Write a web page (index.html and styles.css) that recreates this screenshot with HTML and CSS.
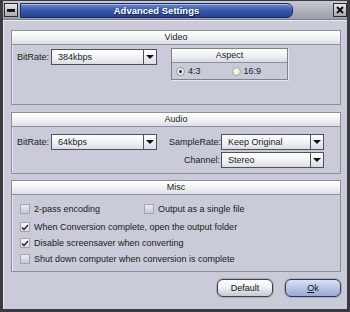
FILE: index.html
```html
<!DOCTYPE html>
<html lang="en">
<head>
  <meta charset="UTF-8" />
  <title>Advanced Settings</title>
  <link rel="stylesheet" href="styles.css">
</head>
<body>
  <div class="window">
    <div class="titlebar">
      <span class="tb-btn"><span class="tb-min"></span></span>
      <div class="title-pill">Advanced Settings</div>
      <span class="tb-btn tb-close">
        <svg width="8" height="8" viewBox="0 0 8 8"><path d="M1 1L7 7M7 1L1 7" stroke="#111" stroke-width="2"/></svg>
      </span>
    </div>

    <div class="content">
      <section class="panel video">
        <div class="panel-head">Video</div>
        <div class="panel-body video-body">
          <div class="field">
            <label class="lbl">BitRate:</label>
            <div class="select sel-short"><span>384kbps</span><i class="arrow"></i></div>
          </div>
          <div class="aspect">
            <div class="aspect-head">Aspect</div>
            <div class="aspect-body">
              <span class="opt"><span class="radio on"></span>4:3</span>
              <span class="opt"><span class="radio hover"></span>16:9</span>
            </div>
          </div>
        </div>
      </section>

      <section class="panel audio">
        <div class="panel-head">Audio</div>
        <div class="panel-body audio-body">
          <div class="field">
            <label class="lbl">BitRate:</label>
            <div class="select sel-short"><span>64kbps</span><i class="arrow"></i></div>
          </div>
          <div class="audio-right">
            <div class="field">
              <label class="lbl-right">SampleRate:</label>
              <div class="select sel-wide"><span>Keep Original</span><i class="arrow"></i></div>
            </div>
            <div class="field">
              <label class="lbl-right">Channel:</label>
              <div class="select sel-wide"><span>Stereo</span><i class="arrow"></i></div>
            </div>
          </div>
        </div>
      </section>

      <section class="panel misc">
        <div class="panel-head">Misc</div>
        <div class="panel-body misc-body">
          <div class="row first">
            <span class="check-item col1"><span class="check"></span>2-pass encoding</span>
            <span class="check-item"><span class="check"></span>Output as a single file</span>
          </div>
          <div class="row">
            <span class="check-item"><span class="check on"><svg width="8" height="7" viewBox="0 0 8 7"><path d="M1 3.5L3 5.5L7 1" stroke="#222" stroke-width="1.3" fill="none"/></svg></span>When Conversion complete, open the output folder</span>
          </div>
          <div class="row">
            <span class="check-item"><span class="check on"><svg width="8" height="7" viewBox="0 0 8 7"><path d="M1 3.5L3 5.5L7 1" stroke="#222" stroke-width="1.3" fill="none"/></svg></span>Disable screensaver when converting</span>
          </div>
          <div class="row">
            <span class="check-item"><span class="check"></span>Shut down computer when conversion is complete</span>
          </div>
        </div>
      </section>

      <div class="buttons">
        <button class="btn">Default</button>
        <button class="btn btn-ok"><u>O</u>k</button>
      </div>
    </div>
  </div>
</body>
</html>
```

FILE: styles.css
```css
* {
  box-sizing: border-box;
}
body {
  margin: 0;
  font-family: "Liberation Sans", Arial, sans-serif;
  font-size: 9px;
  color: #1a1a1a;
  background: #c9ccd8;
}
.window {
  width: 350px;
  height: 312px;
  background: #c9ccd8;
  border: 3px solid #3a3b3f;
  border-top-width: 1px;
  display: flex;
  flex-direction: column;
}
.titlebar {
  height: 19px;
  display: flex;
  align-items: center;
  padding: 0 0 0 1px;
  background: linear-gradient(#c6c9d2, #9a9ea8);
  border-bottom: 1px solid #7c808a;
}
.tb-btn {
  width: 14px;
  height: 14px;
  border: 1px solid #2c2d31;
  background: linear-gradient(#e6e7ec, #a7aab3);
  display: flex;
  align-items: center;
  justify-content: center;
  flex: none;
}
.tb-min {
  width: 8px;
  height: 3px;
  background: #1d1e22;
  border-top: 1px solid #000;
}
.title-pill {
  width: 273px;
  height: 15px;
  margin-left: 2px;
  background: linear-gradient(#6d8ad0, #3a5cb0 45%, #23438f);
  border: 1px solid #1a2c62;
  border-radius: 0 6px 6px 0;
  box-shadow: inset 0 1px 0 #a9bce8;
  color: #fff;
  font-weight: bold;
  font-size: 9.5px;
  text-align: center;
  line-height: 13px;
  text-shadow: 1px 1px 0 #1a2750;
}
.tb-close {
  margin-left: auto;
  margin-right: 0;
}
.content {
  flex: 1;
  padding: 9px 6px 0 7px;
  border-left: 1px solid #e9eaef;
  border-top: 1px solid #e9eaef;
  display: flex;
  flex-direction: column;
}
.panel {
  border: 1px solid #8c909c;
  box-shadow: inset 1px 1px 0 #e6e8ee;
}
.panel-head {
  height: 14px;
  line-height: 13px;
  text-align: center;
  background: linear-gradient(#ffffff, #f2f3f6 50%, #dcdee6);
  border-bottom: 1px solid #8c909c;
}
.video {
  height: 75px;
}
.audio {
  height: 62px;
  margin-top: 7px;
}
.misc {
  height: 92px;
  margin-top: 6px;
}
.panel-body {
  display: flex;
  padding-left: 5px;
}
.video-body {
  padding-top: 4px;
}
.audio-body {
  padding-top: 7px;
}
.field {
  display: flex;
  align-items: center;
  height: 16px;
}
.lbl {
  width: 34px;
}
.lbl-right {
  width: 52px;
  text-align: right;
  padding-right: 1px;
  white-space: nowrap;
}
.select {
  height: 16px;
  display: flex;
  align-items: center;
  border: 1px solid #4e515b;
  background: linear-gradient(#ffffff, #eef0f4 60%, #dadde5);
}
.select span {
  flex: 1;
  padding-left: 6px;
}
.sel-short {
  width: 106px;
}
.sel-wide {
  width: 103px;
}
.arrow {
  width: 13px;
  height: 14px;
  border-left: 1px solid #4e515b;
  background: linear-gradient(#ffffff, #dadde5);
  display: flex;
  align-items: center;
  justify-content: center;
}
.arrow::after {
  content: "";
  border-left: 4px solid transparent;
  border-right: 4px solid transparent;
  border-top: 4px solid #111;
}
.aspect {
  width: 117px;
  height: 32px;
  margin-left: 14px;
  margin-top: -1px;
  border: 1px solid #7e828e;
  box-shadow: 1px 1px 0 #e9eaef;
}
.aspect-head {
  height: 14px;
  line-height: 13px;
  text-align: center;
  background: linear-gradient(#ffffff, #eceef2 60%, #d6d9e1);
  border-bottom: 1px solid #8c909c;
}
.aspect-body {
  display: flex;
  align-items: center;
  height: 16px;
  padding-left: 4px;
}
.opt {
  display: flex;
  align-items: center;
  width: 56px;
}
.radio {
  width: 9px;
  height: 9px;
  border-radius: 50%;
  border: 1px solid #9a9da7;
  background: radial-gradient(#ffffff, #d5d8e0);
  margin-right: 3px;
  position: relative;
}
.radio.on::after {
  content: "";
  position: absolute;
  left: 2px;
  top: 2px;
  width: 3px;
  height: 3px;
  border-radius: 50%;
  background: #222;
}
.radio.hover {
  border-color: #8cbf7a;
}
.audio-right {
  margin-left: 12px;
  display: flex;
  flex-direction: column;
  gap: 2px;
}
.misc-body {
  flex-direction: column;
  padding-top: 6px;
  padding-left: 8px;
}
.row {
  height: 16px;
  display: flex;
  align-items: center;
}
.row.first {
  margin-bottom: 2px;
}
.check-item {
  display: flex;
  align-items: center;
}
.col1 {
  width: 124px;
}
.check {
  width: 10px;
  height: 10px;
  border: 1px solid #a2a5b0;
  background: linear-gradient(#eceef2, #c5c8d1);
  margin-right: 4px;
  display: flex;
  align-items: center;
  justify-content: center;
}
.check.on {
  background: linear-gradient(#f6f7f9, #d9dbe2);
}
.buttons {
  display: flex;
  justify-content: flex-end;
  gap: 12px;
  margin-top: 7px;
}
.btn {
  width: 56px;
  height: 18px;
  border: 1px solid #3f4046;
  border-radius: 6px;
  background: linear-gradient(#ffffff, #eceef2 50%, #c6c9d2);
  font-family: "Liberation Sans", Arial, sans-serif;
  font-size: 9px;
  color: #111;
  padding: 0;
  box-shadow: 0 0 0 1px #a9acb6;
}
.btn-ok {
  background: linear-gradient(#d8e0f4, #b8c5e8 50%, #98abd9);
  border-color: #353a4c;
}
```
